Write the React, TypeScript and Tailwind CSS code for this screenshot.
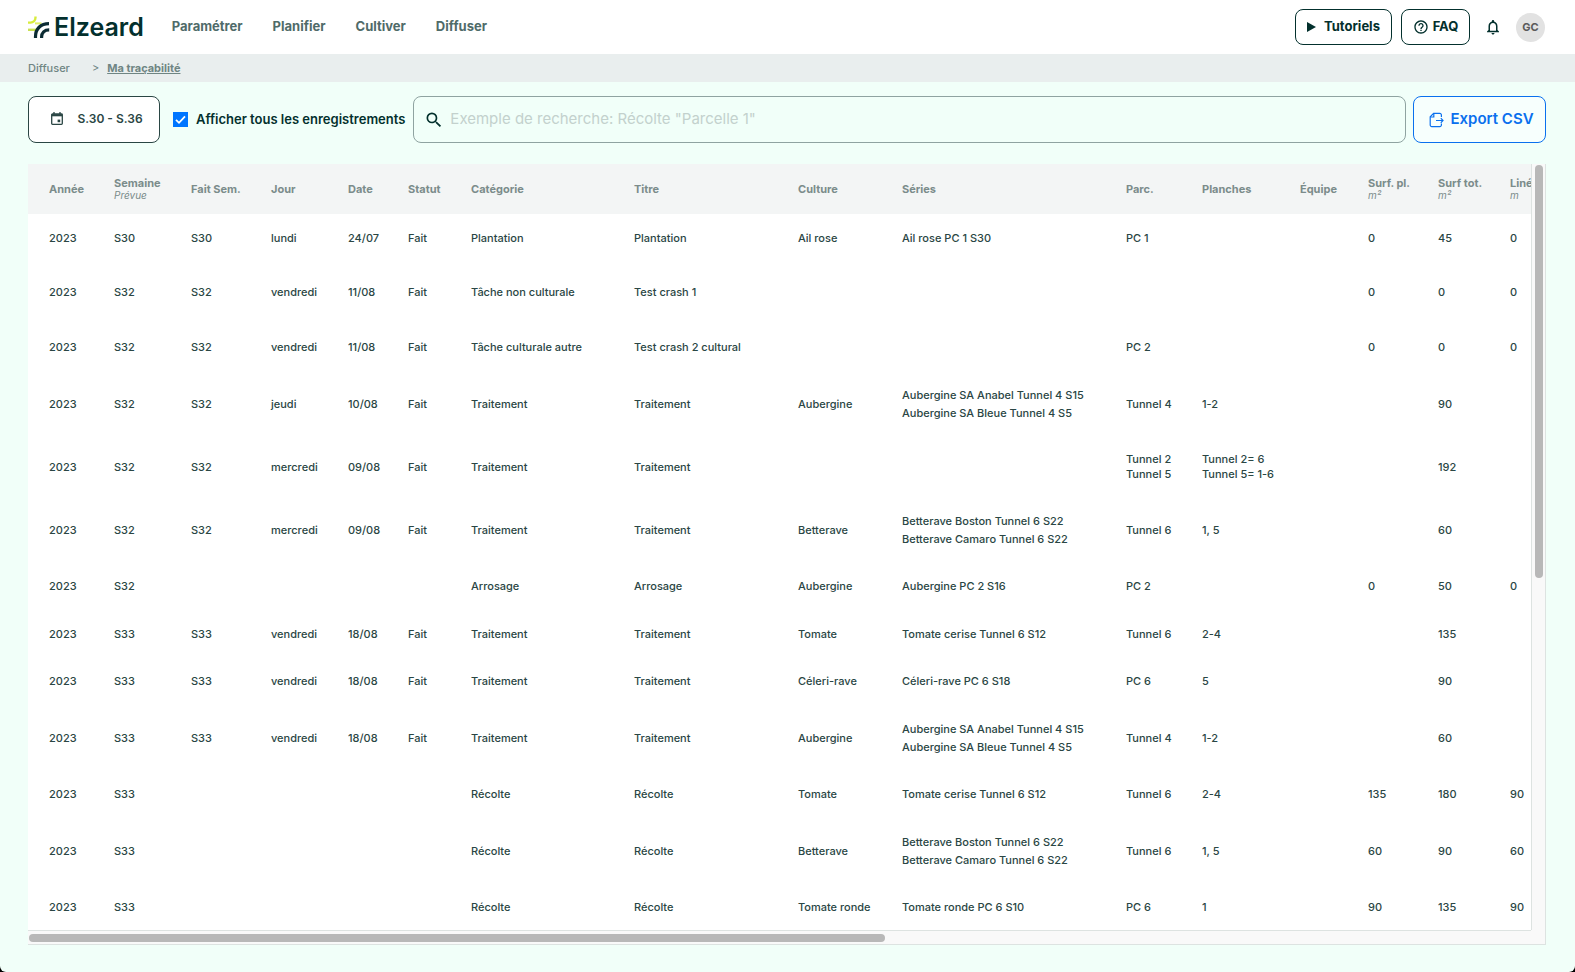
import React from "react";
import { MdSearch, MdNotificationsNone, MdHelpOutline } from "react-icons/md";

type Cell = string | string[];

const columns: { label: string; unit?: string; width: string }[] = [
  { label: "Année", width: "w-[86px]" },
  { label: "Semaine", unit: "Prévue", width: "w-[77px]" },
  { label: "Fait Sem.", width: "w-[80px]" },
  { label: "Jour", width: "w-[77px]" },
  { label: "Date", width: "w-[60px]" },
  { label: "Statut", width: "w-[63px]" },
  { label: "Catégorie", width: "w-[163px]" },
  { label: "Titre", width: "w-[164px]" },
  { label: "Culture", width: "w-[104px]" },
  { label: "Séries", width: "w-[224px]" },
  { label: "Parc.", width: "w-[76px]" },
  { label: "Planches", width: "w-[98px]" },
  { label: "Équipe", width: "w-[68px]" },
  { label: "Surf. pl.", unit: "m²", width: "w-[70px]" },
  { label: "Surf tot.", unit: "m²", width: "w-[72px]" },
  { label: "Linéaire", unit: "m", width: "w-[90px]" },
];

const anabel = ["Aubergine SA Anabel Tunnel 4 S15", "Aubergine SA Bleue Tunnel 4 S5"];
const boston = ["Betterave Boston Tunnel 6 S22", "Betterave Camaro Tunnel 6 S22"];

const rows: { height: string; cells: Cell[] }[] = [
  { height: "h-12", cells: ["2023", "S30", "S30", "lundi", "24/07", "Fait", "Plantation", "Plantation", "Ail rose", "Ail rose PC 1 S30", "PC 1", "", "", "0", "45", "0"] },
  { height: "h-[61px]", cells: ["2023", "S32", "S32", "vendredi", "11/08", "Fait", "Tâche non culturale", "Test crash 1", "", "", "", "", "", "0", "0", "0"] },
  { height: "h-[49px]", cells: ["2023", "S32", "S32", "vendredi", "11/08", "Fait", "Tâche culturale autre", "Test crash 2 cultural", "", "", "PC 2", "", "", "0", "0", "0"] },
  { height: "h-16", cells: ["2023", "S32", "S32", "jeudi", "10/08", "Fait", "Traitement", "Traitement", "Aubergine", anabel, "Tunnel 4", "1-2", "", "", "90", ""] },
  { height: "h-[62px]", cells: ["2023", "S32", "S32", "mercredi", "09/08", "Fait", "Traitement", "Traitement", "", "", ["Tunnel 2", "Tunnel 5"], ["Tunnel 2= 6", "Tunnel 5= 1-6"], "", "", "192", ""] },
  { height: "h-16", cells: ["2023", "S32", "S32", "mercredi", "09/08", "Fait", "Traitement", "Traitement", "Betterave", boston, "Tunnel 6", "1, 5", "", "", "60", ""] },
  { height: "h-[49px]", cells: ["2023", "S32", "", "", "", "", "Arrosage", "Arrosage", "Aubergine", "Aubergine PC 2 S16", "PC 2", "", "", "0", "50", "0"] },
  { height: "h-[47px]", cells: ["2023", "S33", "S33", "vendredi", "18/08", "Fait", "Traitement", "Traitement", "Tomate", "Tomate cerise Tunnel 6 S12", "Tunnel 6", "2-4", "", "", "135", ""] },
  { height: "h-[47px]", cells: ["2023", "S33", "S33", "vendredi", "18/08", "Fait", "Traitement", "Traitement", "Céleri-rave", "Céleri-rave PC 6 S18", "PC 6", "5", "", "", "90", ""] },
  { height: "h-[66px]", cells: ["2023", "S33", "S33", "vendredi", "18/08", "Fait", "Traitement", "Traitement", "Aubergine", anabel, "Tunnel 4", "1-2", "", "", "60", ""] },
  { height: "h-[47px]", cells: ["2023", "S33", "", "", "", "", "Récolte", "Récolte", "Tomate", "Tomate cerise Tunnel 6 S12", "Tunnel 6", "2-4", "", "135", "180", "90"] },
  { height: "h-[66px]", cells: ["2023", "S33", "", "", "", "", "Récolte", "Récolte", "Betterave", boston, "Tunnel 6", "1, 5", "", "60", "90", "60"] },
  { height: "h-[47px]", cells: ["2023", "S33", "", "", "", "", "Récolte", "Récolte", "Tomate ronde", "Tomate ronde PC 6 S10", "PC 6", "1", "", "90", "135", "90"] },
];

const SERIES = 9;

function Logo() {
  return (
    <a href="#" className="flex items-center gap-1 text-[#03302d]" aria-label="Elzeard">
      <svg width="22" height="24" viewBox="0 0 22 24" fill="none">
        <path d="M0 7.600h2.500a5 5 0 0 0 5-5V1.500" stroke="#d7ec3c" strokeWidth="2.400" />
        <path d="M7 8.400h6.500" stroke="#e0ee66" strokeWidth="2" />
        <path d="M0 14.800h8" stroke="#c9e052" strokeWidth="2.400" />
        <path d="M7.500 23v-1.500C7.500 14 12.500 8.600 21 8.600" stroke="#0b2b33" strokeWidth="3.200" />
        <path d="M13.600 23v-1c0-4.200 2.800-7.200 7.600-7.200" stroke="#0b2b33" strokeWidth="3.200" />
      </svg>
      <span className="text-[25px] leading-7 font-semibold">Elzeard</span>
    </a>
  );
}

function CalendarIcon() {
  return (
    <svg width="12" height="13" viewBox="0 0 12 13" fill="none" stroke="currentColor" strokeWidth="1.300">
      <rect x="0.700" y="2" width="10.600" height="10.300" rx="0.800" />
      <path d="M0.700 3.200h10.600" strokeWidth="2.200" />
      <path d="M3 0v2M9 0v2" />
      <rect x="6.600" y="7.600" width="2.600" height="2.600" fill="currentColor" stroke="none" />
    </svg>
  );
}

function ExportIcon() {
  return (
    <svg width="15" height="16" viewBox="0 0 15 16" fill="none" stroke="currentColor" strokeWidth="1.200">
      <path d="M12.400 5V3a1.600 1.600 0 0 0-1.600-1.600H4.600L1.200 4.800V13a1.600 1.600 0 0 0 1.600 1.600h8A1.600 1.600 0 0 0 12.400 13v-1.500" />
      <path d="M4.800 1.400V5H1.200M7 8.500h7M11.800 6.200l2.200 2.300-2.200 2.300" />
    </svg>
  );
}

export default function App() {
  return (
    <div className="h-screen bg-black font-['Inter',sans-serif]">
      <div className="flex h-full flex-col overflow-hidden rounded-b-md bg-[#f1fff9]">
        <header className="flex h-[54px] shrink-0 items-center bg-white pr-[30px] pl-7">
          <Logo />
          <nav className="ml-7 flex grow gap-[30px] text-[13px] font-bold text-[#4f6b69]">
            <a href="#">Paramétrer</a>
            <a href="#">Planifier</a>
            <a href="#">Cultiver</a>
            <a href="#">Diffuser</a>
          </nav>
          <div className="flex items-center text-[13px] font-bold text-[#03302d]">
            <button className="flex h-9 w-[97px] items-center justify-center gap-2 rounded-lg border border-[#03302d]">
              <svg width="9" height="10" viewBox="0 0 9 10" fill="currentColor">
                <path d="M0 0 9 5 0 10z" />
              </svg>
              Tutoriels
            </button>
            <button className="ml-[9px] flex h-9 w-[69px] items-center justify-center gap-1 rounded-lg border border-[#03302d]">
              <MdHelpOutline size={16} />
              FAQ
            </button>
            <button className="ml-3.5" aria-label="Notifications">
              <MdNotificationsNone size={18} />
            </button>
            <button className="ml-3.5 size-[29px] rounded-full bg-[#e2e2e2] text-[11px] text-[#5a5a5a]">GC</button>
          </div>
        </header>

        <nav className="flex h-7 shrink-0 items-center bg-[#e9eeee] px-7 text-[11px] text-[#6f8583]">
          <a href="#" className="font-medium">Diffuser</a>
          <span className="mr-2 ml-[22px]">&gt;</span>
          <a href="#" className="font-bold underline">Ma traçabilité</a>
        </nav>

        <main className="flex min-h-0 grow flex-col pt-3.5 pr-[29px] pb-[27px] pl-7">
          <div className="flex h-[47px] shrink-0 items-center">
            <button className="flex h-full w-[132px] items-center justify-center gap-3.5 rounded-lg border border-[#2a4644] bg-white pb-0.5 pl-1.5 text-[12px] font-semibold text-[#2a4644]">
              <CalendarIcon />
              S.30 - S.36
            </button>
            <label className="ml-[13px] flex items-center gap-2 text-[13px] font-semibold text-[#03302d]">
              <span className="grid size-[15px] place-items-center">
                <input type="checkbox" defaultChecked className="peer col-start-1 row-start-1 size-[15px] appearance-none border border-[#0075ff] checked:bg-[#0075ff]" />
                <svg className="pointer-events-none invisible col-start-1 row-start-1 peer-checked:visible" width="13" height="13" viewBox="0 0 13 13" fill="none" stroke="white" strokeWidth="1.800">
                  <path d="m2 6.800 3 3L11 3.300" />
                </svg>
              </span>
              Afficher tous les enregistrements
            </label>
            <label className="ml-2 flex h-full grow items-center gap-1.5 rounded-lg border border-[#8fa3a1] px-2.5 text-[#03302d]">
              <MdSearch size={20} />
              <input
                type="text"
                aria-label="Recherche"
                placeholder={'Exemple de recherche: Récolte "Parcelle 1"'}
                className="min-w-0 grow bg-transparent text-[15px] outline-none placeholder:text-[#c3d1cd]"
              />
            </label>
            <button className="ml-[7px] flex h-full w-[133px] items-center justify-center gap-1.5 rounded-lg border border-[#0a70ee] bg-[#f7fffd] pl-1 text-[15px] font-semibold text-[#0a70ee]">
              <ExportIcon />
              Export CSV
            </button>
          </div>

          <div className="mt-[21px] grid min-h-0 grow grid-cols-[minmax(0,1fr)_15px] grid-rows-[minmax(0,1fr)_15px]">
            <div className="overflow-auto bg-white [scrollbar-width:none]">
              <table className="w-max table-fixed border-collapse text-left text-[11px] font-medium text-[#2a4644]">
                <thead className="bg-[#f3f5f5] text-[#7b8c8b]">
                  <tr className="h-[50px]">
                    {columns.map((c) => (
                      <th key={c.label} className={`${c.width} p-0 align-middle leading-3 font-bold whitespace-nowrap first:pl-[21px]`}>
                        {c.label}
                        {c.unit && <span className="block text-[10px] leading-3 font-normal italic">{c.unit}</span>}
                      </th>
                    ))}
                  </tr>
                </thead>
                <tbody>
                  {rows.map((row, r) => (
                    <tr key={r} className={row.height}>
                      {row.cells.map((cell, i) => (
                        <td key={i} className={`p-0 align-middle whitespace-nowrap first:pl-[21px] ${i === SERIES && Array.isArray(cell) ? "leading-[18px]" : "leading-[15px]"}`}>
                          {Array.isArray(cell) ? cell.map((line) => <div key={line}>{line}</div>) : cell}
                        </td>
                      ))}
                    </tr>
                  ))}
                </tbody>
              </table>
            </div>
            <div className="flex justify-center border-x border-[#dde3e1] bg-[#f9f9f9] py-px">
              <div className="h-[54%] w-2 rounded-full bg-[#b8b8b8]" />
            </div>
            <div className="flex items-center border-y border-[#dde3e1] bg-[#f9f9f9] px-px">
              <div className="h-2 w-[57%] rounded-full bg-[#b8b8b8]" />
            </div>
            <div className="border-r border-b border-[#dde3e1] bg-[#f9f9f9]" />
          </div>
        </main>
      </div>
    </div>
  );
}
